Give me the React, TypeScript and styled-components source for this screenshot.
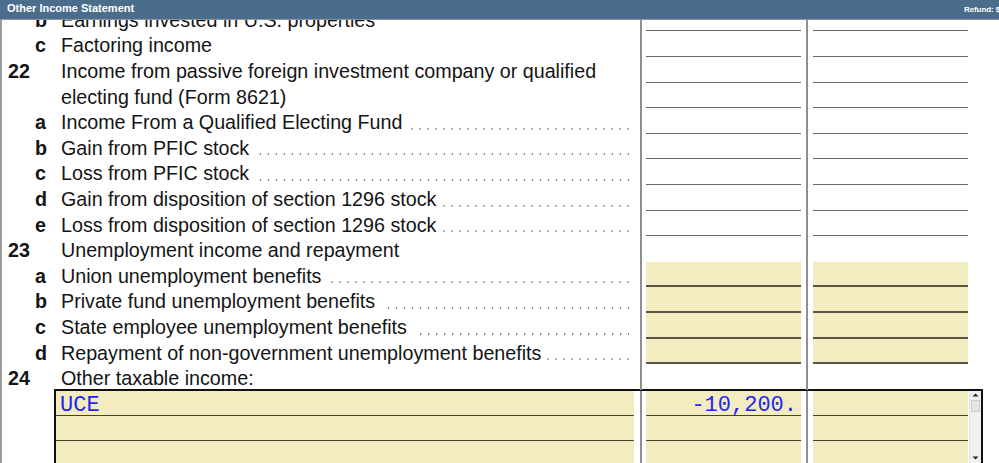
import React from 'react';
import styled, { createGlobalStyle } from 'styled-components';

const ROW = 25.6;

const Global = createGlobalStyle`
  html, body { margin: 0; padding: 0; background: #fff; }
  body { width: 999px; height: 463px; overflow: hidden; font-family: "Liberation Sans", Arial, sans-serif; }
  * { box-sizing: border-box; }
`;

const Page = styled.div`
  width: 999px;
  height: 463px;
  display: flex;
  flex-direction: column;
  overflow: hidden;
  background: #fff;
`;

const TitleBar = styled.header`
  flex: 0 0 20px;
  display: flex;
  align-items: flex-start;
  background: #4b6d8c;
  border-bottom: 1px solid #8d959d;
  color: #fff;
  font-weight: bold;
  overflow: hidden;
`;

const Title = styled.div`
  flex: 1;
  padding: 2px 0 0 7px;
  font-size: 11px;
  white-space: nowrap;
`;

const Refund = styled.div`
  flex: 0 0 35px;
  padding-top: 5px;
  font-size: 8px;
  letter-spacing: -0.1px;
  white-space: nowrap;
  overflow: hidden;
`;

const Viewport = styled.div`
  flex: 1;
  overflow: hidden;
  border-left: 2px solid #9b9b9b;
`;

const Sheet = styled.div`
  margin-top: -14.2px;
`;

const Row = styled.div<{ $h?: number }>`
  display: grid;
  grid-template-columns: 638px 166px 1fr;
  height: ${(p) => p.$h ?? ROW}px;
`;

const Desc = styled.div`
  display: flex;
  min-width: 0;
  padding: 4px 0 0 6px;
  font-size: 19.7px;
  line-height: 21.6px;
  color: #141414;
  white-space: nowrap;
`;

const Label = styled.span<{ $sub?: boolean }>`
  flex: 0 0 53px;
  padding-left: ${(p) => (p.$sub ? 27 : 0)}px;
  font-weight: bold;
`;

const Leader = styled.span`
  flex: 1;
  align-self: stretch;
  margin: 0 11px 0 6px;
  background-image: linear-gradient(90deg, transparent 7px, #6a6a6a 7px);
  background-size: 8px 2px;
  background-repeat: repeat-x;
  background-position: right 0 bottom 4px;
`;

const AmountCol = styled.div<{ $pad: number }>`
  display: flex;
  border-left: 2px solid #8f8f8f;
  padding-left: ${(p) => p.$pad}px;
`;

type Kind = 'none' | 'line' | 'input';

const Field = styled.div<{ $kind: Kind }>`
  width: 155px;
  height: 100%;
  background: ${(p) => (p.$kind === 'input' ? '#f3ecc0' : 'transparent')};
  border-bottom: ${(p) =>
    p.$kind === 'input' ? '2px solid #5a5744' : p.$kind === 'line' ? '1px solid #6a6a6a' : 'none'};
`;

const EntryBox = styled.div`
  display: flex;
  width: 929px;
  height: 74px;
  margin-left: 52px;
  border: 2px solid #111;
  border-bottom: none;
  overflow: hidden;
`;

const EntryRows = styled.div`
  flex: 1;
  display: flex;
  flex-direction: column;
`;

const EntryRow = styled.div`
  flex: 0 0 25px;
  display: grid;
  grid-template-columns: 584px 166px 163px;
`;

const EntryDescCol = styled.div`
  padding-right: 6px;
`;

const EntryAmountCol = styled.div<{ $pad: number }>`
  border-left: 2px solid #8f8f8f;
  padding-left: ${(p) => p.$pad}px;
`;

const EntryField = styled.div<{ $w?: number; $right?: boolean }>`
  width: ${(p) => (p.$w ? `${p.$w}px` : '100%')};
  height: 100%;
  padding: 6px ${(p) => (p.$right ? 4 : 0)}px 0 ${(p) => (p.$right ? 0 : 4)}px;
  background: #f3ecc0;
  border-bottom: 1px solid #45422f;
  font-family: "Liberation Mono", "Courier New", monospace;
  font-size: 22px;
  line-height: 18px;
  color: #2424f2;
  text-align: ${(p) => (p.$right ? 'right' : 'left')};
  white-space: nowrap;
`;

const ScrollBar = styled.div`
  flex: 0 0 12px;
  display: flex;
  flex-direction: column;
  background: #f1f1f1;
  border-left: 1px solid #e2e2e2;
`;

const ScrollButton = styled.div`
  flex: 0 0 9px;
  display: flex;
  align-items: center;
  justify-content: center;
  background: #f0f0f0;
`;

const ScrollThumb = styled.div`
  flex: 0 0 12px;
  margin: 0 1px;
  background: #e4e4e4;
  border: 1px solid #cdcdcd;
`;

const ScrollTrack = styled.div`
  flex: 1;
`;

const Arrow = ({ down }: { down?: boolean }) => (
  <svg width="7" height="4" viewBox="0 0 7 4">
    <polygon points={down ? '0.5,0.5 6.5,0.5 3.5,3.5' : '0.5,3.5 6.5,3.5 3.5,0.5'} fill="#222" />
  </svg>
);

type Line = {
  label?: string;
  sub?: boolean;
  text: string;
  dots?: boolean;
  kind: Kind;
  h?: number;
};

const lines: Line[] = [
  { label: 'b', sub: true, text: 'Earnings invested in U.S. properties', kind: 'line' },
  { label: 'c', sub: true, text: 'Factoring income', kind: 'line' },
  { label: '22', text: 'Income from passive foreign investment company or qualified', kind: 'line' },
  { text: 'electing fund (Form 8621)', kind: 'line' },
  { label: 'a', sub: true, text: 'Income From a Qualified Electing Fund', dots: true, kind: 'line' },
  { label: 'b', sub: true, text: 'Gain from PFIC stock', dots: true, kind: 'line' },
  { label: 'c', sub: true, text: 'Loss from PFIC stock', dots: true, kind: 'line' },
  { label: 'd', sub: true, text: 'Gain from disposition of section 1296 stock', dots: true, kind: 'line' },
  { label: 'e', sub: true, text: 'Loss from disposition of section 1296 stock', dots: true, kind: 'line' },
  { label: '23', text: 'Unemployment income and repayment', kind: 'none' },
  { label: 'a', sub: true, text: 'Union unemployment benefits', dots: true, kind: 'input' },
  { label: 'b', sub: true, text: 'Private fund unemployment benefits', dots: true, kind: 'input' },
  { label: 'c', sub: true, text: 'State employee unemployment benefits', dots: true, kind: 'input' },
  { label: 'd', sub: true, text: 'Repayment of non-government unemployment benefits', dots: true, kind: 'input' },
  { label: '24', text: 'Other taxable income:', kind: 'none', h: 24.4 },
];

const entries = [
  { desc: 'UCE', amount: '-10,200.', other: '' },
  { desc: '', amount: '', other: '' },
  { desc: '', amount: '', other: '' },
];

export default function App() {
  return (
    <Page>
      <Global />
      <TitleBar>
        <Title>Other Income Statement</Title>
        <Refund>Refund: $0</Refund>
      </TitleBar>
      <Viewport>
        <Sheet>
          {lines.map((l, i) => (
            <Row key={i} $h={l.h}>
              <Desc>
                <Label $sub={l.sub}>{l.label ?? ''}</Label>
                <span>{l.text}</span>
                {l.dots && <Leader />}
              </Desc>
              <AmountCol $pad={4}>
                <Field $kind={l.kind} />
              </AmountCol>
              <AmountCol $pad={5}>
                <Field $kind={l.kind} />
              </AmountCol>
            </Row>
          ))}
          <EntryBox>
            <EntryRows>
              {entries.map((e, i) => (
                <EntryRow key={i}>
                  <EntryDescCol>
                    <EntryField>{e.desc}</EntryField>
                  </EntryDescCol>
                  <EntryAmountCol $pad={4}>
                    <EntryField $w={155} $right>
                      {e.amount}
                    </EntryField>
                  </EntryAmountCol>
                  <EntryAmountCol $pad={5}>
                    <EntryField $w={155} $right>
                      {e.other}
                    </EntryField>
                  </EntryAmountCol>
                </EntryRow>
              ))}
            </EntryRows>
            <ScrollBar>
              <ScrollButton>
                <Arrow />
              </ScrollButton>
              <ScrollThumb />
              <ScrollTrack />
              <ScrollButton>
                <Arrow down />
              </ScrollButton>
            </ScrollBar>
          </EntryBox>
        </Sheet>
      </Viewport>
    </Page>
  );
}
